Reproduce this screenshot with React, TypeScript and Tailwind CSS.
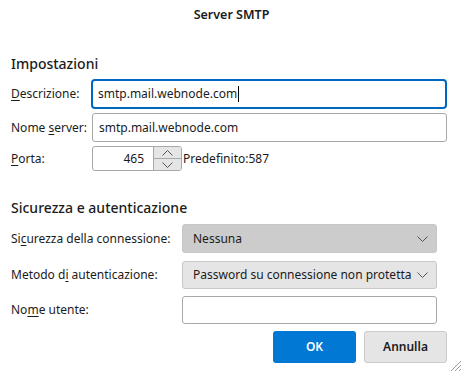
import { ReactNode } from 'react'

const font = { fontFamily: '"Noto Sans", "Open Sans", sans-serif' }

function U({ children }: { children: ReactNode }) {
  return <span className="underline underline-offset-2">{children}</span>
}

function Chevron() {
  return (
    <svg width="11" height="6" viewBox="0 0 11 6" className="shrink-0">
      <path d="M0.5 0.5l5 5 5-5" fill="none" stroke="#555" strokeWidth="1" />
    </svg>
  )
}

function Select({ value, dark }: { value: string; dark?: boolean }) {
  return (
    <div
      className={`flex items-center justify-between w-[255px] rounded-[3px] border border-[#c7c7c7] pl-[10px] pr-[8px] text-[12px] text-[#1b1b1b] ${
        dark ? 'h-[29px] bg-[#cccccc]' : 'h-[28px] bg-[#e5e5e5]'
      }`}
    >
      <span className="whitespace-nowrap">{value}</span>
      <Chevron />
    </div>
  )
}

export default function App() {
  return (
    <div className="w-[463px] h-[373px] bg-white relative overflow-hidden text-[#1b1b1b] whitespace-nowrap" style={font}>
      <div className="h-[30px] flex items-center justify-center text-[12.5px] font-semibold">Server SMTP</div>

      <div className="px-[11px]">
        <div className="mt-[24px] text-[14px] font-medium leading-[20px]">Impostazioni</div>

        <div className="mt-[5px] flex items-center h-[30px]">
          <label className="w-[80px] text-[12px]"><U>D</U>escrizione:</label>
          <div className="flex-1 h-[30px] mr-[5px] rounded-[4px] border-2 border-[#0067c0] flex items-center px-[5px] text-[12px]">
            smtp.mail.webnode.com<span className="inline-block w-px h-[16px] bg-black ml-px" />
          </div>
        </div>

        <div className="mt-[4px] flex items-center h-[29px]">
          <label className="w-[81px] text-[12px]">Nome <U>s</U>erver:</label>
          <div className="flex-1 h-[29px] mr-[5px] rounded-[3px] border border-[#a8a8a8] flex items-center px-[6px] text-[12px]">
            smtp.mail.webnode.com
          </div>
        </div>

        <div className="mt-[4px] flex items-center h-[25px]">
          <label className="w-[81px] text-[12px]"><U>P</U>orta:</label>
          <div className="flex h-[25px] w-[90px] rounded-[3px] border border-[#a8a8a8] overflow-hidden">
            <div className="flex-1 flex items-center justify-end pr-[9px] text-[12px]">465</div>
            <div className="w-[28px] flex flex-col bg-[#e5e5e5] border-l border-[#a8a8a8]">
              <div className="flex-1 flex items-center justify-center border-b border-[#a8a8a8]">
                <svg width="11" height="6" viewBox="0 0 11 6"><path d="M0.5 5.5l5-5 5 5" fill="none" stroke="#555" /></svg>
              </div>
              <div className="flex-1 flex items-center justify-center">
                <svg width="11" height="6" viewBox="0 0 11 6"><path d="M0.5 0.5l5 5 5-5" fill="none" stroke="#555" /></svg>
              </div>
            </div>
          </div>
          <span className="text-[12px] ml-px">Predefinito:587</span>
        </div>

        <div className="mt-[27px] text-[14px] font-medium leading-[20px]">Sicurezza e autenticazione</div>

        <div className="mt-[6px] flex items-center h-[29px]">
          <label className="w-[171px] text-[12px]">Si<U>c</U>urezza della connessione:</label>
          <Select value="Nessuna" dark />
        </div>

        <div className="mt-[8px] flex items-center h-[28px]">
          <label className="w-[171px] text-[12px]">Metodo d<U>i</U> autenticazione:</label>
          <Select value="Password su connessione non protetta" />
        </div>

        <div className="mt-[7px] flex items-center h-[28px]">
          <label className="w-[171px] text-[12px]">No<U>m</U>e utente:</label>
          <div className="w-[255px] h-[28px] rounded-[3px] border border-[#a8a8a8] bg-white" />
        </div>

        <div className="mt-[7px] flex justify-end gap-[8px] pr-[5px]">
          <button className="w-[83px] h-[32px] rounded-[3px] bg-[#0078d4] text-white text-[12px] font-semibold">OK</button>
          <button className="w-[83px] h-[32px] rounded-[3px] bg-[#e5e5e5] border border-[#cccccc] text-[12px] font-semibold">Annulla</button>
        </div>
      </div>

      <svg className="absolute right-[1px] bottom-[1px]" width="12" height="12" viewBox="0 0 12 12">
        <path d="M11 1L1 11M11 5L5 11M11 9L9 11" stroke="#999" strokeWidth="1" />
      </svg>
    </div>
  )
}
